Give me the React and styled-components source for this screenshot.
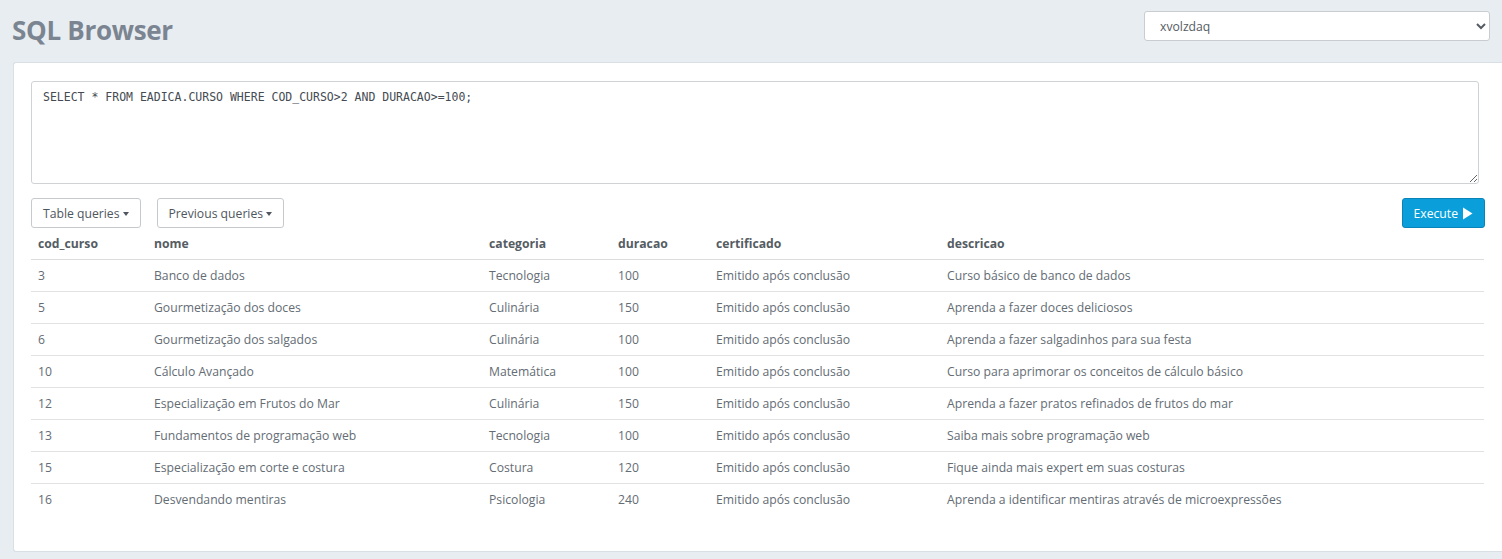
import { createGlobalStyle } from "styled-components";
import styled from "styled-components";

const GlobalStyle = createGlobalStyle`
  html, body {
    margin: 0;
    padding: 0;
    background: #e8edf1;
    font-family: "Open Sans", "Noto Sans", sans-serif;
    color: #646c74;
  }
  * { box-sizing: border-box; }
`;

const Page = styled.div`
  width: 1502px;
  height: 559px;
  overflow: hidden;
  padding: 0 0 0 13px;
`;

const Header = styled.div`
  display: flex;
  align-items: center;
  justify-content: space-between;
  height: 62px;
  padding-right: 12px;
`;

const Title = styled.h1`
  margin: 0 0 2px -1px;
  font-size: 26px;
  font-weight: 700;
  color: #7b8591;
  letter-spacing: -0.3px;
`;

const DbSelect = styled.select`
  width: 346px;
  height: 30px;
  padding: 0 11px;
  border: 1px solid #c9cdd1;
  border-radius: 3px;
  background: #fff;
  font-family: inherit;
  font-size: 12.2px;
  color: #555c63;
  margin-bottom: 10px;
`;

const Panel = styled.div`
  background: #fff;
  border: 1px solid #d8e0e6;
  border-right: none;
  border-radius: 3px 0 0 3px;
  height: 490px;
  padding: 18px 17px 0 17px;
`;

const QueryBox = styled.textarea`
  display: block;
  width: 1448px;
  height: 103px;
  padding: 7px 11px;
  border: 1px solid #cfd3d6;
  border-radius: 3px;
  resize: vertical;
  font-family: "DejaVu Sans Mono", "Liberation Mono", monospace;
  font-size: 11.5px;
  line-height: 16px;
  color: #444b52;
  outline: none;
`;

const Toolbar = styled.div`
  display: flex;
  align-items: center;
  gap: 16px;
  margin-top: 14px;
`;

const DropButton = styled.button`
  display: flex;
  align-items: center;
  gap: 3px;
  height: 30px;
  padding: 0 11px;
  border: 1px solid #c6cacd;
  border-radius: 3px;
  background: #fff;
  font-family: inherit;
  font-size: 12.2px;
  color: #4f565d;
`;

const Caret = styled.span`
  width: 0;
  height: 0;
  border-left: 3.5px solid transparent;
  border-right: 3.5px solid transparent;
  border-top: 4px solid #4f565d;
  margin-top: 1px;
`;

const ExecuteButton = styled.button`
  margin-left: auto;
  display: flex;
  align-items: center;
  gap: 4px;
  height: 30px;
  padding: 0 11px;
  border: 1px solid #0a84b8;
  border-radius: 3px;
  background: #0a9fda;
  color: #fff;
  font-family: inherit;
  font-size: 12.2px;
`;

const Table = styled.table`
  width: 1453px;
  border-collapse: collapse;
  margin-top: 0;
  font-size: 12.2px;
`;

const Th = styled.th`
  text-align: left;
  font-weight: 700;
  color: #555c63;
  height: 31px;
  padding: 0 7px;
  border-bottom: 1px solid #dcdcdc;
`;

const Td = styled.td`
  height: 32px;
  padding: 0 7px;
  color: #646c74;
  border-top: 1px solid #e2e2e2;
`;

const columns = [
  { key: "cod_curso", width: 116 },
  { key: "nome", width: 335 },
  { key: "categoria", width: 129 },
  { key: "duracao", width: 98 },
  { key: "certificado", width: 231 },
  { key: "descricao" },
];

const rows = [
  ["3", "Banco de dados", "Tecnologia", "100", "Emitido após conclusão", "Curso básico de banco de dados"],
  ["5", "Gourmetização dos doces", "Culinária", "150", "Emitido após conclusão", "Aprenda a fazer doces deliciosos"],
  ["6", "Gourmetização dos salgados", "Culinária", "100", "Emitido após conclusão", "Aprenda a fazer salgadinhos para sua festa"],
  ["10", "Cálculo Avançado", "Matemática", "100", "Emitido após conclusão", "Curso para aprimorar os conceitos de cálculo básico"],
  ["12", "Especialização em Frutos do Mar", "Culinária", "150", "Emitido após conclusão", "Aprenda a fazer pratos refinados de frutos do mar"],
  ["13", "Fundamentos de programação web", "Tecnologia", "100", "Emitido após conclusão", "Saiba mais sobre programação web"],
  ["15", "Especialização em corte e costura", "Costura", "120", "Emitido após conclusão", "Fique ainda mais expert em suas costuras"],
  ["16", "Desvendando mentiras", "Psicologia", "240", "Emitido após conclusão", "Aprenda a identificar mentiras através de microexpressões"],
];

const App = () => {
  return (
    <Page>
      <GlobalStyle />
      <Header>
        <Title>SQL Browser</Title>
        <DbSelect defaultValue="xvolzdaq">
          <option value="xvolzdaq">xvolzdaq</option>
        </DbSelect>
      </Header>
      <Panel>
        <QueryBox
          defaultValue="SELECT * FROM EADICA.CURSO WHERE COD_CURSO>2 AND DURACAO>=100;"
          spellCheck={false}
        />
        <Toolbar>
          <DropButton>
            Table queries <Caret />
          </DropButton>
          <DropButton>
            Previous queries <Caret />
          </DropButton>
          <ExecuteButton>
            Execute
            <svg width="11" height="13" viewBox="0 0 11 13">
              <path d="M1 0.5 L10.5 6.5 L1 12.5 Z" fill="#fff" />
            </svg>
          </ExecuteButton>
        </Toolbar>
        <Table>
          <thead>
            <tr>
              {columns.map((c) => (
                <Th key={c.key} style={c.width ? { width: c.width } : undefined}>
                  {c.key}
                </Th>
              ))}
            </tr>
          </thead>
          <tbody>
            {rows.map((r) => (
              <tr key={r[0]}>
                {r.map((cell, i) => (
                  <Td key={i}>{cell}</Td>
                ))}
              </tr>
            ))}
          </tbody>
        </Table>
      </Panel>
    </Page>
  );
};

export default App;
